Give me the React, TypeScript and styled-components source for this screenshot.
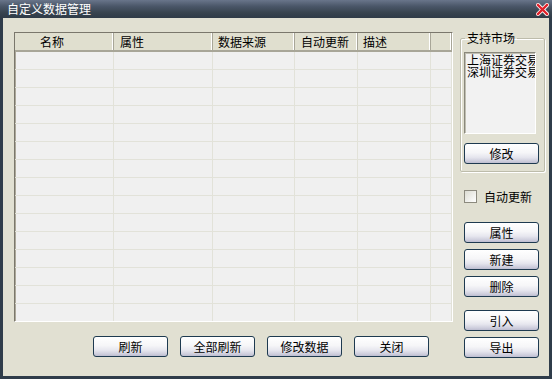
import React from "react";
import styled, { createGlobalStyle } from "styled-components";

const Global = createGlobalStyle`
  html, body { margin: 0; padding: 0; background: #2f3c4a; }
  body { font-family: "Noto Sans CJK SC", "Noto Sans", sans-serif; font-size: 12px; }
  * { box-sizing: border-box; }
`;

const Window = styled.div`
  width: 552px;
  height: 379px;
  display: flex;
  flex-direction: column;
  background: #2f3c4a;
  padding: 0 3px 3px 3px;
  overflow: hidden;
`;

const TitleBar = styled.div`
  height: 18px;
  margin: 0 -3px;
  padding: 0 3px 0 7px;
  display: flex;
  align-items: center;
  justify-content: space-between;
  background: linear-gradient(#69758a 0%, #4a5668 35%, #38444f 70%, #2f3b47 100%);
  color: #ffffff;
  font-size: 12px;
  line-height: 12px;
`;

const CloseIcon = () => (
  <svg width="13" height="13" viewBox="0 0 13 13">
    <path d="M2 2 L11 11 M11 2 L2 11" stroke="#ffffff" strokeWidth="4" strokeLinecap="square" />
    <path d="M2 2 L11 11 M11 2 L2 11" stroke="#e0202a" strokeWidth="2.4" strokeLinecap="square" />
  </svg>
);

const Body = styled.div`
  flex: 1;
  background: #e1e0d2;
  display: flex;
  padding: 14px 0 0 11px;
  gap: 7px;
`;

const LeftCol = styled.div`
  display: flex;
  flex-direction: column;
  width: 439px;
`;

const ListView = styled.div`
  width: 439px;
  height: 290px;
  border-top: 1px solid #7a776c;
  border-left: 1px solid #7a776c;
  border-right: 1px solid #ffffff;
  border-bottom: 1px solid #ffffff;
  background: #f0f0f0;
  overflow: hidden;
  box-shadow: inset 1px 1px 0 #aca899;
`;

const HeaderRow = styled.div`
  display: flex;
  height: 19px;
  background: #e0dfcf;
  border-bottom: 2px solid #a8a698;
`;

const HeaderCell = styled.div<{ w: number; pad: number }>`
  width: ${(p) => p.w}px;
  flex: ${(p) => (p.w ? "none" : "1")};
  padding-left: ${(p) => p.pad}px;
  border-right: 1px solid #a8a698;
  box-shadow: inset -1px 0 0 #ffffff;
  line-height: 17px;
  white-space: nowrap;
  color: #000;
`;

const Row = styled.div`
  display: flex;
  height: 18px;
  border-bottom: 1px solid #e2e2d9;
`;

const Cell = styled.div<{ w: number }>`
  width: ${(p) => p.w}px;
  flex: ${(p) => (p.w ? "none" : "1")};
  border-right: 1px solid #e2e2d9;
`;

const BottomBar = styled.div`
  display: flex;
  gap: 12px;
  padding: 14px 0 0 79px;
`;

const Button = styled.button`
  width: 75px;
  height: 21px;
  padding: 0;
  border: 1px solid #1e3a50;
  border-radius: 3px;
  background: linear-gradient(#ffffff 0%, #f6f6f8 45%, #e6e6ee 70%, #cdcddc 90%, #bdbdd0 100%);
  font-family: "Noto Sans CJK SC", sans-serif;
  font-size: 12px;
  line-height: 19px;
  color: #000;
`;

const RightCol = styled.div`
  width: 82px;
  display: flex;
  flex-direction: column;
`;

const GroupBox = styled.fieldset`
  margin: 0;
  padding: 8px 5px 8px 3px;
  height: 140px;
  border: 1px solid #bdbcab;
  box-shadow: inset 1px 1px 0 #ffffff, 1px 1px 0 #ffffff;
  border-radius: 2px;
  display: flex;
  flex-direction: column;
  gap: 9px;
`;

const Legend = styled.legend`
  padding: 0 2px;
  margin-left: 1px;
  line-height: 12px;
  font-size: 12px;
  color: #000;
`;

const MarketList = styled.div`
  height: 82px;
  width: 72px;
  background: #f2f2f2;
  border-top: 1px solid #8a887c;
  border-left: 1px solid #8a887c;
  border-right: 1px solid #ffffff;
  border-bottom: 1px solid #ffffff;
  box-shadow: inset 1px 1px 0 #c0bfb2;
  padding: 1px 0 0 2px;
  overflow: hidden;
`;

const MarketItem = styled.div`
  line-height: 12px;
  height: 12px;
  white-space: nowrap;
  overflow: hidden;
  font-size: 12px;
  color: #000;
`;

const CheckRow = styled.label`
  display: flex;
  align-items: center;
  gap: 7px;
  margin: 18px 0 0 4px;
  height: 13px;
  color: #000;
  line-height: 13px;
`;

const CheckBox = styled.span`
  width: 13px;
  height: 13px;
  border: 1px solid #8c8a7e;
  background: linear-gradient(135deg, #dcdcd2, #ffffff);
`;

const SideButtons = styled.div<{ top: number }>`
  display: flex;
  flex-direction: column;
  gap: 6px;
  margin: ${(p) => p.top}px 0 0 4px;
`;

const cols = [
  { label: "名称", w: 99, pad: 25 },
  { label: "属性", w: 99, pad: 6 },
  { label: "数据来源", w: 82, pad: 5 },
  { label: "自动更新", w: 63, pad: 6 },
  { label: "描述", w: 73, pad: 5 },
  { label: "", w: 0, pad: 0 },
];

export default function App() {
  const rows = Array.from({ length: 16 });
  return (
    <>
      <Global />
      <Window>
        <TitleBar>
          <span>自定义数据管理</span>
          <CloseIcon />
        </TitleBar>
        <Body>
          <LeftCol>
            <ListView>
              <HeaderRow>
                {cols.map((c, i) => (
                  <HeaderCell key={i} w={c.w} pad={c.pad}>
                    {c.label}
                  </HeaderCell>
                ))}
              </HeaderRow>
              {rows.map((_, r) => (
                <Row key={r}>
                  {cols.map((c, i) => (
                    <Cell key={i} w={c.w} />
                  ))}
                </Row>
              ))}
            </ListView>
            <BottomBar>
              <Button>刷新</Button>
              <Button>全部刷新</Button>
              <Button>修改数据</Button>
              <Button>关闭</Button>
            </BottomBar>
          </LeftCol>
          <RightCol>
            <GroupBox>
              <Legend>支持市场</Legend>
              <MarketList>
                <MarketItem>上海证券交易所</MarketItem>
                <MarketItem>深圳证券交易所</MarketItem>
              </MarketList>
              <Button>修改</Button>
            </GroupBox>
            <CheckRow>
              <CheckBox />
              <span>自动更新</span>
            </CheckRow>
            <SideButtons top={19}>
              <Button>属性</Button>
              <Button>新建</Button>
              <Button>删除</Button>
            </SideButtons>
            <SideButtons top={13}>
              <Button>引入</Button>
              <Button>导出</Button>
            </SideButtons>
          </RightCol>
        </Body>
      </Window>
    </>
  );
}
